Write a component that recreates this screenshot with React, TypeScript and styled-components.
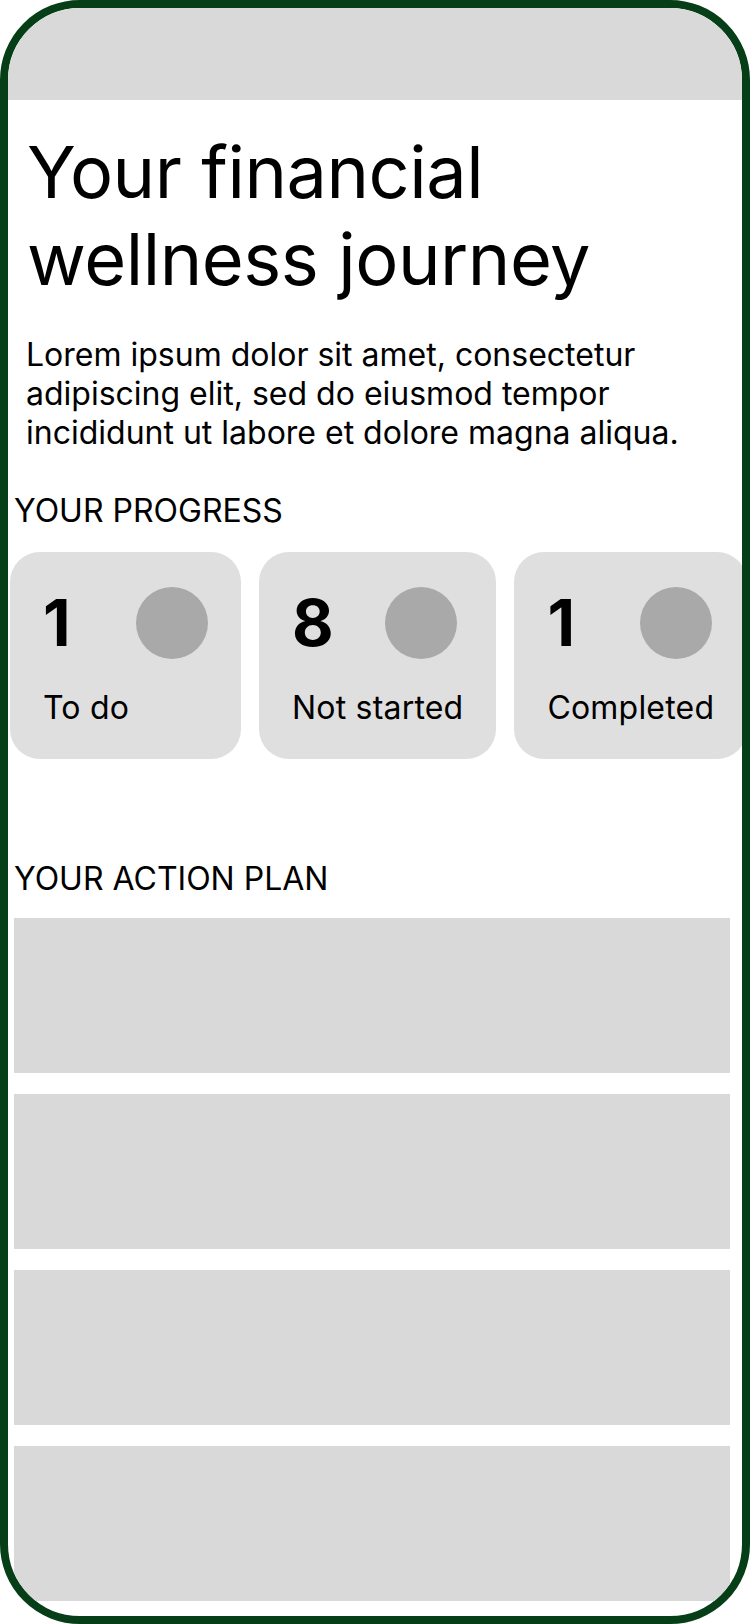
import React from "react";
import styled, { createGlobalStyle } from "styled-components";

const GlobalStyle = createGlobalStyle`
  html, body {
    margin: 0;
    padding: 0;
    background: #ffffff;
  }
  body {
    font-family: Inter, "Noto Sans", "Liberation Sans", sans-serif;
    color: #000000;
  }
  * {
    box-sizing: border-box;
  }
`;

const Frame = styled.div`
  width: 750px;
  height: 1624px;
  border: 8px solid #063f17;
  border-radius: 80px;
  overflow: hidden;
  background: #ffffff;
  display: flex;
  flex-direction: column;
`;

const TopBar = styled.header`
  height: 92px;
  flex-shrink: 0;
  background: #d9d9d9;
`;

const Intro = styled.section`
  padding: 28px 20px 0 18px;
  display: flex;
  flex-direction: column;
`;

const Title = styled.h1`
  margin: 0 0 0 1px;
  font-size: 72px;
  font-weight: 400;
  line-height: normal;
  letter-spacing: -0.45px;
`;

const Lead = styled.p`
  margin: 33px 0 0 0;
  font-size: 32px;
  font-weight: 400;
  line-height: normal;
`;

const SectionLabel = styled.h2<{ $top: number }>`
  margin: ${(p) => p.$top}px 0 0 0;
  padding-left: 6px;
  font-size: 32px;
  font-weight: 400;
  line-height: normal;
  text-transform: uppercase;
`;

const CardRow = styled.div`
  margin-top: 22px;
  padding-left: 2px;
  display: flex;
  gap: 18px;
  overflow: hidden;
`;

const Card = styled.div`
  flex-shrink: 0;
  background: #dfdfdf;
  border-radius: 30px;
  padding: 35px 33px 32px 33px;
  display: flex;
  flex-direction: column;
  gap: 29px;
  min-width: 229px;
`;

const CardTop = styled.div`
  display: grid;
  grid-template-columns: 93px 72px;
  align-items: center;
`;

const Count = styled.span`
  font-size: 64px;
  font-weight: 700;
  line-height: 1;
`;

const Dot = styled.span`
  width: 72px;
  height: 72px;
  border-radius: 50%;
  background: #a9a9a9;
`;

const CardLabel = styled.span`
  font-size: 32px;
  font-weight: 400;
  line-height: normal;
  white-space: nowrap;
  letter-spacing: 0.2px;
`;

const PlanList = styled.div`
  margin: 20px 12px 0 6px;
  display: flex;
  flex-direction: column;
  gap: 21px;
`;

const PlanItem = styled.div`
  height: 155px;
  background: #d9d9d9;
  flex-shrink: 0;
`;

const progress = [
  { count: 1, label: "To do" },
  { count: 8, label: "Not started" },
  { count: 1, label: "Completed" },
];

export default function App() {
  return (
    <>
      <GlobalStyle />
      <Frame>
        <TopBar />
        <Intro>
          <Title>Your financial wellness journey</Title>
          <Lead>
            Lorem ipsum dolor sit amet, consectetur adipiscing elit, sed do
            eiusmod tempor incididunt ut labore et dolore magna aliqua.
          </Lead>
        </Intro>
        <SectionLabel $top={39}>Your progress</SectionLabel>
        <CardRow>
          {progress.map((p) => (
            <Card key={p.label}>
              <CardTop>
                <Count>{p.count}</Count>
                <Dot />
              </CardTop>
              <CardLabel>{p.label}</CardLabel>
            </Card>
          ))}
        </CardRow>
        <SectionLabel $top={100}>Your action plan</SectionLabel>
        <PlanList>
          {[0, 1, 2, 3].map((i) => (
            <PlanItem key={i} />
          ))}
        </PlanList>
      </Frame>
    </>
  );
}
